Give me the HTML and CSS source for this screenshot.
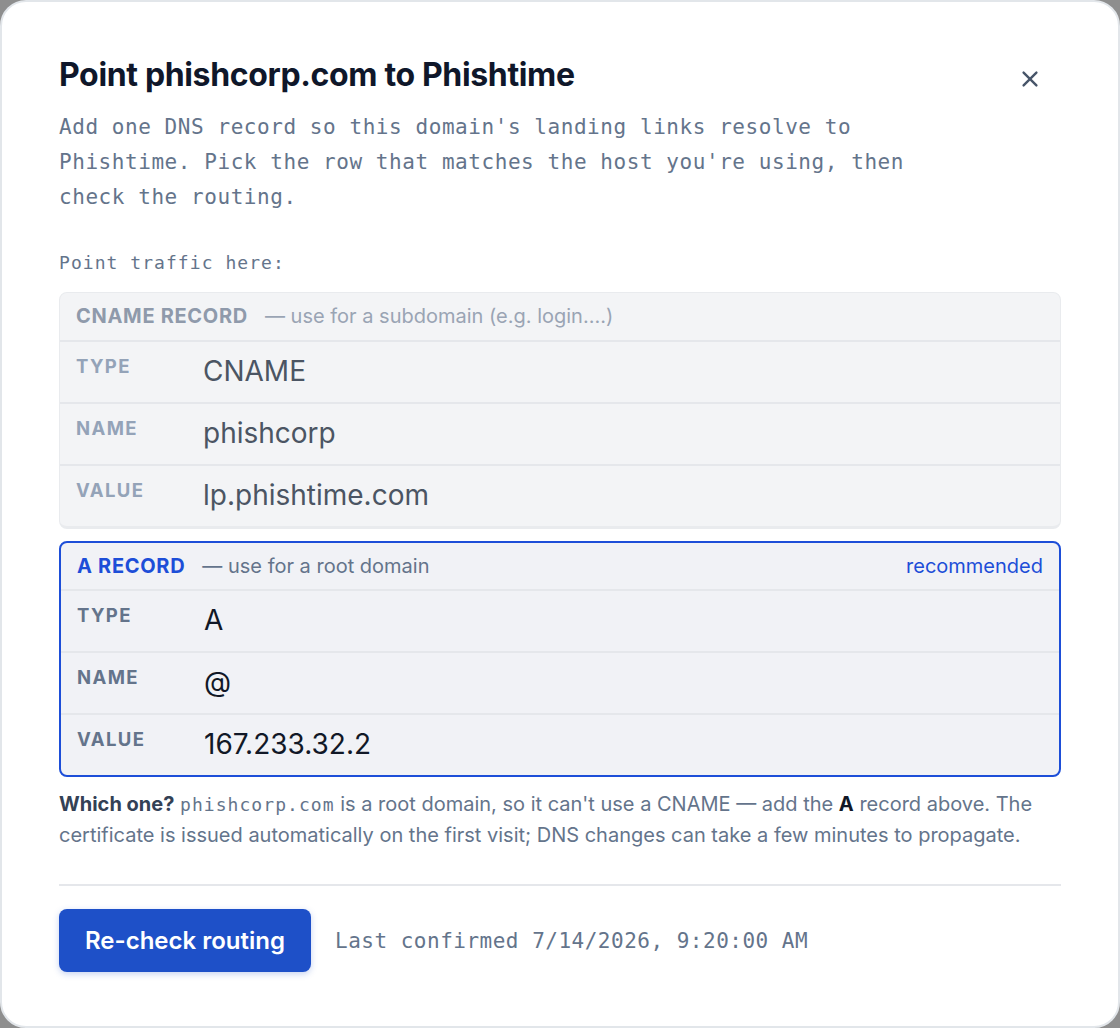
FILE: index.html
```html
<!DOCTYPE html>
<html lang="en">
<head>
<meta charset="utf-8">
<title>Point phishcorp.com to Phishtime</title>
<link rel="stylesheet" href="styles.css">
</head>
<body>
<div class="modal">
  <div class="head">
    <h1 class="title">Point phishcorp.com to Phishtime</h1>
    <button class="close" aria-label="Close">
      <svg width="22" height="22" viewBox="0 0 24 24" fill="none" stroke="#475569" stroke-width="2.6" stroke-linecap="round"><path d="M5 5L19 19M19 5L5 19"/></svg>
    </button>
  </div>
  <p class="desc">Add one DNS record so this domain's landing links resolve to Phishtime. Pick the row that matches the host you're using, then check the routing.</p>
  <p class="point">Point traffic here:</p>

  <div class="card dim">
    <div class="card-head">
      <span class="kind">CNAME RECORD</span>
      <span class="hint">— use for a subdomain (e.g. login....)</span>
    </div>
    <div class="row"><span class="lbl">TYPE</span><span class="val">CNAME</span></div>
    <div class="row"><span class="lbl">NAME</span><span class="val">phishcorp</span></div>
    <div class="row"><span class="lbl">VALUE</span><span class="val">lp.phishtime.com</span></div>
  </div>

  <div class="card active">
    <div class="card-head">
      <span class="kind">A RECORD</span>
      <span class="hint">— use for a root domain</span>
      <span class="rec">recommended</span>
    </div>
    <div class="row"><span class="lbl">TYPE</span><span class="val">A</span></div>
    <div class="row"><span class="lbl">NAME</span><span class="val">@</span></div>
    <div class="row"><span class="lbl">VALUE</span><span class="val">167.233.32.2</span></div>
  </div>

  <p class="explain"><b class="q">Which one?</b> <code>phishcorp.com</code> is a root domain, so it can't use a CNAME — add the <b class="a">A</b> record above. The certificate is issued automatically on the first visit; DNS changes can take a few minutes to propagate.</p>

  <div class="footer">
    <button class="btn">Re-check routing</button>
    <span class="last">Last confirmed 7/14/2026, 9:20:00 AM</span>
  </div>
</div>
</body>
</html>
```

FILE: styles.css
```css
html, body {
  margin: 0;
  padding: 0;
}
body {
  background: #8e8e8e;
  font-family: Inter, "Noto Sans", sans-serif;
}
.modal {
  box-sizing: border-box;
  width: 1120px;
  height: 1028px;
  background: #ffffff;
  border: 2px solid #e2e6ea;
  border-radius: 26px;
  padding: 53px 57px 0 57px;
}
.head {
  display: flex;
  align-items: center;
  justify-content: space-between;
}
.title {
  margin: 0;
  font-size: 32px;
  line-height: 40px;
  font-weight: 700;
  color: #0f172a;
  letter-spacing: -0.35px;
}
.close {
  border: 0;
  background: none;
  padding: 0;
  width: 22px;
  height: 22px;
  margin-right: 20px;
  margin-top: 8px;
  cursor: pointer;
}
.desc {
  margin: 15px 0 0 0;
  max-width: 880px;
  font-family: "DejaVu Sans Mono", monospace;
  font-size: 21px;
  letter-spacing: 0.56px;
  line-height: 35px;
  color: #64748b;
}
.point {
  margin: 37px 0 0 0;
  font-family: "DejaVu Sans Mono", monospace;
  font-size: 18px;
  letter-spacing: 1.05px;
  line-height: 22px;
  color: #64748b;
}
.card {
  margin-top: 18px;
  border-radius: 8px;
  border: 2px solid #e8eaee;
  background: #f3f4f6;
  overflow: hidden;
}
.card.dim {
  border-width: 1px 1px 3px 1px;
  border-color: #e9ebee;
}
.card.active {
  margin-top: 12px;
  border: 2px solid #1d4ed8;
  background: #f1f2f6;
}
.card-head {
  display: flex;
  align-items: baseline;
  gap: 17px;
  height: 47px;
  padding: 0 16px;
  line-height: 47px;
  border-bottom: 2px solid #e5e7eb;
}
.active .card-head {
  height: 46px;
  line-height: 46px;
}
.kind {
  font-size: 20px;
  font-weight: 700;
  letter-spacing: 0.7px;
  color: #8f9aab;
}
.active .kind {
  color: #1d4ed8;
}
.hint {
  font-size: 20px;
  color: #9aa4b4;
}
.active .hint {
  color: #64748b;
}
.rec {
  margin-left: auto;
  font-size: 20px;
  color: #1d4ed8;
}
.row {
  display: flex;
  align-items: flex-start;
  height: 60px;
  padding: 0 16px;
  border-bottom: 2px solid #e5e7eb;
}
.row:last-child {
  border-bottom: 0;
}
.lbl {
  width: 127px;
  flex: none;
  padding-top: 14px;
  font-size: 18.5px;
  line-height: 20px;
  font-weight: 700;
  letter-spacing: 1.4px;
  color: #94a3b8;
}
.active .lbl {
  color: #64748b;
}
.val {
  padding-top: 12px;
  font-size: 28px;
  line-height: 34px;
  color: #4b5563;
}
.active .val {
  color: #111827;
}
.explain {
  margin: 12px 0 0 0;
  font-size: 20px;
  line-height: 31px;
  color: #64748b;
}
.explain .q {
  color: #334155;
  font-weight: 700;
}
.explain .a {
  color: #111827;
  font-weight: 700;
}
.explain code {
  font-family: "DejaVu Sans Mono", monospace;
  font-size: 18px;
  line-height: 1;
  letter-spacing: 1.05px;
  color: #64748b;
}
.footer {
  margin-top: 33px;
  border-top: 2px solid #e5e7eb;
  padding-top: 23px;
  display: flex;
  align-items: center;
  gap: 24px;
}
.btn {
  border: 0;
  background: #1e50c8;
  color: #ffffff;
  font-family: Inter, "Noto Sans", sans-serif;
  font-size: 24px;
  font-weight: 600;
  width: 252px;
  height: 63px;
  border-radius: 8px;
  box-shadow: 0 2px 6px rgba(30, 80, 200, 0.25);
  cursor: pointer;
}
.last {
  font-family: "DejaVu Sans Mono", monospace;
  font-size: 21px;
  letter-spacing: 0.5px;
  color: #64748b;
}
```
